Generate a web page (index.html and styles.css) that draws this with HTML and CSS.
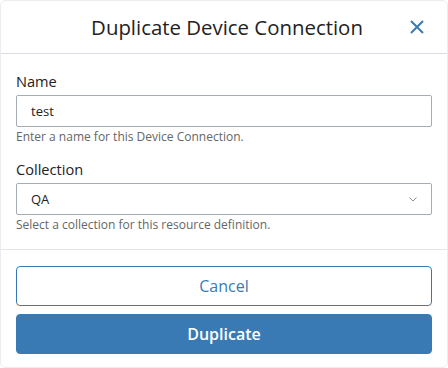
FILE: index.html
```html
<!DOCTYPE html>
<html>
<head>
<meta charset="utf-8">
<link rel="stylesheet" href="styles.css">
</head>
<body>
<div class="card">
  <div class="header">
    <span class="spacer"></span>
    <h1 class="title">Duplicate Device Connection</h1>
    <button class="close" aria-label="Close">
      <svg width="16" height="16" viewBox="0 0 16 16"><path d="M2 2 L14 14 M14 2 L2 14" stroke="#3a7ab4" stroke-width="2" fill="none"/></svg>
    </button>
  </div>
  <div class="body">
    <div class="field">
      <label class="label">Name</label>
      <div class="input">test</div>
      <div class="help">Enter a name for this Device Connection.</div>
    </div>
    <div class="field">
      <label class="label">Collection</label>
      <div class="input select">
        <span>QA</span>
        <svg width="8" height="5" viewBox="0 0 8 5"><path d="M0.5 0.5 L4 4 L7.5 0.5" stroke="#8a8f96" stroke-width="1" fill="none"/></svg>
      </div>
      <div class="help">Select a collection for this resource definition.</div>
    </div>
  </div>
  <div class="footer">
    <button class="btn btn-outline">Cancel</button>
    <button class="btn btn-primary">Duplicate</button>
  </div>
</div>
</body>
</html>
```
FILE: styles.css
```css
* { box-sizing: border-box; }
html, body { margin: 0; padding: 0; background: #fff; }
body { font-family: "Open Sans", "Noto Sans", sans-serif; color: #222; }
.card {
  width: 448px;
  height: 368px;
  border: 1px solid #ececf0;
  border-radius: 6px;
  background: #fff;
  display: flex;
  flex-direction: column;
}
.header {
  height: 53px;
  flex: none;
  display: grid;
  grid-template-columns: 1fr auto 1fr;
  align-items: center;
  border-bottom: 1px solid #dcdde6;
  padding: 0 22px 0 28px;
}
.title {
  margin: 0;
  font-size: 20.4px;
  font-weight: 400;
  color: #222;
  line-height: 28px;
}
.close {
  justify-self: end;
  background: none;
  border: 0;
  padding: 0;
  display: flex;
}
.body {
  padding: 17px 15px 16px 15px;
  display: flex;
  flex-direction: column;
  gap: 14px;
  border-bottom: 1px solid #e4e4ea;
}
.field { display: flex; flex-direction: column; }
.label {
  font-size: 14.6px;
  line-height: 20px;
  margin-bottom: 4px;
  color: #222;
}
.input {
  height: 32px;
  border: 1px solid #a6acb3;
  border-radius: 2px;
  padding: 0 14px;
  display: flex;
  align-items: center;
  font-size: 13px;
  color: #222;
}
.select { justify-content: space-between; padding-right: 14px; }
.help {
  font-size: 12px;
  line-height: 16px;
  margin-top: 2px;
  color: #666;
}
.footer {
  padding: 16px 15px 0 15px;
  display: flex;
  flex-direction: column;
  gap: 8px;
}
.btn {
  height: 40px;
  border-radius: 4px;
  font-family: inherit;
  font-size: 16px;
}
.btn-outline {
  background: #fff;
  border: 1px solid #3a7ab4;
  color: #3a7ab4;
}
.btn-primary {
  background: #3a7ab4;
  border: 1px solid #3a7ab4;
  color: #fff;
  font-weight: 600;
}
```
